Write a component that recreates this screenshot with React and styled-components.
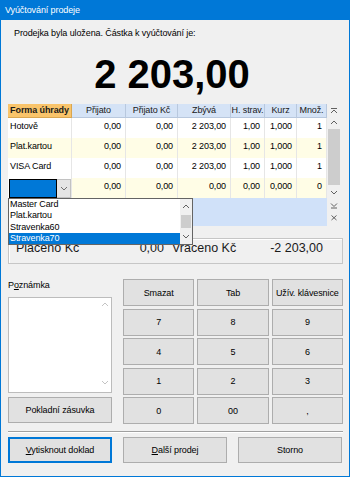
import styled, { createGlobalStyle } from "styled-components";

const GlobalStyle = createGlobalStyle`
  html, body {
    margin: 0;
    padding: 0;
    background: #f0f0f0;
  }
  body {
    font-family: "Liberation Sans", Arial, sans-serif;
    font-size: 9px;
    letter-spacing: -0.1px;
    color: #000;
  }
  * {
    box-sizing: border-box;
  }
`;

const Window = styled.div`
  width: 350px;
  height: 477px;
  display: flex;
  flex-direction: column;
  border: 1px solid #0078d7;
  border-top: none;
  background: #f0f0f0;
  overflow: hidden;
`;

const TitleBar = styled.div`
  height: 20px;
  margin: 0 -1px;
  padding-left: 5px;
  background: #0078d7;
  color: #fff;
  line-height: 20px;
`;

const Body = styled.div`
  flex: 1;
  display: flex;
  flex-direction: column;
  padding: 6px 6px 0 7px;
`;

const Prompt = styled.div`
  margin-left: 6px;
  line-height: 14px;
`;

const Amount = styled.div`
  margin-top: 11px;
  padding-right: 7px;
  text-align: center;
  font-size: 40px;
  font-weight: bold;
  line-height: 46px;
  letter-spacing: 0;
`;

const GridFrame = styled.div`
  position: relative;
  margin-top: 7px;
  height: 122px;
  display: flex;
`;

const Table = styled.div`
  width: 319px;
  display: flex;
  flex-direction: column;
  background: #d0e1f9;
`;

const columns = "64px 54px 52px 53px 34px 32px 30px";

const HeaderRow = styled.div`
  display: grid;
  grid-template-columns: ${columns};
  height: 14px;
`;

const HeaderCell = styled.div`
  background: ${(p) => (p.$accent ? "#f9c46b" : "#d5e3f6")};
  border-right: 1px solid ${(p) => (p.$accent ? "#d9a650" : "#b8c8de")};
  border-bottom: 1px solid ${(p) => (p.$accent ? "#d9a650" : "#b8c8de")};
  font-weight: ${(p) => (p.$accent ? "bold" : "normal")};
  text-align: center;
  line-height: 13px;
  color: #1a1a1a;
  white-space: nowrap;
  overflow: hidden;
`;

const DataRow = styled.div`
  display: grid;
  grid-template-columns: ${columns};
  height: 20px;
  background: ${(p) => (p.$alt ? "#fffde6" : "#ffffff")};
`;

const Cell = styled.div`
  padding: 0 ${(p) => (p.$left ? "0 0 2px" : "4px 0 0")};
  border-right: 1px solid #e6e6e6;
  text-align: ${(p) => (p.$left ? "left" : "right")};
  line-height: 17px;
  white-space: nowrap;
  overflow: hidden;
`;

const ComboCell = styled.div`
  display: flex;
  padding: 1px 0 0 1px;
  border-right: 1px solid #e6e6e6;
  background: #fff;
`;

const ComboField = styled.div`
  flex: 1;
  background: #0078d7;
  border: 1px solid #000;
`;

const ComboButton = styled.div`
  width: 14px;
  display: flex;
  align-items: center;
  justify-content: center;
  background: #e5e5e5;
  border: 1px solid #c2c2c2;
  border-left: none;
`;

const ScrollColumn = styled.div`
  width: 14px;
  display: flex;
  flex-direction: column;
  align-items: center;
  background: #f0f0f0;
`;

const ScrollSlot = styled.div`
  height: ${(p) => p.$h}px;
  display: flex;
  align-items: center;
  justify-content: center;
`;

const Thumb = styled.div`
  width: ${(p) => p.$w}px;
  height: ${(p) => p.$h}px;
  margin-top: ${(p) => p.$mt || 0}px;
  background: #cdcdcd;
`;

const DropList = styled.div`
  position: absolute;
  top: 94px;
  left: 0;
  width: 185px;
  height: 47px;
  display: flex;
  background: #fff;
  border: 1px solid #646464;
  z-index: 2;
`;

const Items = styled.div`
  flex: 1;
  display: flex;
  flex-direction: column;
`;

const Item = styled.div`
  height: 11.25px;
  line-height: 11px;
  padding-left: 1px;
  background: ${(p) => (p.$selected ? "#0078d7" : "transparent")};
  color: ${(p) => (p.$selected ? "#fff" : "#000")};
`;

const DropScroll = styled.div`
  width: 12px;
  display: flex;
  flex-direction: column;
  align-items: center;
  background: #f0f0f0;
`;

const Summary = styled.div`
  margin-top: 12px;
  height: 26px;
  display: grid;
  grid-template-columns: 148px 151px;
  column-gap: 8px;
  padding: 0 18px 0 7px;
  border: 1px solid #c6c6c6;
  box-shadow: inset 1px 1px 0 #fff;
  font-size: 12.5px;
  line-height: 18px;
  letter-spacing: 0;
  color: #1a1a1a;
`;

const SummaryPair = styled.div`
  display: flex;
  justify-content: space-between;
`;

const Lower = styled.div`
  margin-top: 15px;
  display: grid;
  grid-template-columns: 104px 1fr;
  column-gap: 11px;
`;

const NoteColumn = styled.div`
  display: flex;
  flex-direction: column;
`;

const Label = styled.div`
  line-height: 12px;
`;

const NoteBox = styled.div`
  margin-top: 6px;
  height: 96px;
  display: flex;
  justify-content: flex-end;
  background: #fff;
  border: 1px solid #bcbcbc;
`;

const NoteScroll = styled.div`
  width: 13px;
  display: flex;
  flex-direction: column;
  justify-content: space-between;
  padding: 3px 0 6px;
  align-items: center;
`;

const Keypad = styled.div`
  display: grid;
  grid-template-columns: repeat(3, 1fr);
  grid-auto-rows: 27px;
  gap: 2.5px 3px;
`;

const Button = styled.div`
  height: ${(p) => (p.$h ? `${p.$h}px` : "auto")};
  margin-top: ${(p) => p.$mt || 0}px;
  display: flex;
  align-items: center;
  justify-content: center;
  background: #e1e1e1;
  border: 1px solid ${(p) => (p.$focused ? "#0078d7" : "#adadad")};
  box-shadow: ${(p) => (p.$focused ? "inset 0 0 0 1px #0078d7" : "none")};
  color: #000;
  white-space: nowrap;
`;

const Separator = styled.div`
  margin-top: 7px;
  border-top: 1px solid #a0a0a0;
  border-bottom: 1px solid #fff;
`;

const Footer = styled.div`
  margin-top: 4px;
  display: grid;
  grid-template-columns: repeat(3, 104px);
  grid-auto-rows: 26px;
  column-gap: 11px;
`;

const glyphs = {
  first: "M1 1.5 H7 M1 6 L4 3 L7 6",
  up: "M1 5 L4 2 L7 5",
  down: "M1 2 L4 5 L7 2",
  last: "M1 1.5 L4 4.5 L7 1.5 M1 6 H7",
  close: "M1.5 1.5 L6.5 6 M6.5 1.5 L1.5 6",
};

function Glyph({ kind, color = "#606060" }) {
  return (
    <svg width="8" height="7" viewBox="0 0 8 7">
      <path d={glyphs[kind]} fill="none" stroke={color} strokeWidth="1" />
    </svg>
  );
}

const headers = ["Forma úhrady", "Přijato", "Přijato Kč", "Zbývá", "H. strav.", "Kurz", "Množ."];

const rows = [
  { id: 1, name: "Hotově", values: ["0,00", "0,00", "2 203,00", "1,00", "1,000", "1"] },
  { id: 2, name: "Plat.kartou", values: ["0,00", "0,00", "2 203,00", "1,00", "1,000", "1"] },
  { id: 3, name: "VISA Card", values: ["0,00", "0,00", "2 203,00", "1,00", "1,000", "1"] },
];

const options = ["Master Card", "Plat.kartou", "Stravenka60", "Stravenka70"];

const keys = ["Smazat", "Tab", "Užív. klávesnice", "7", "8", "9", "4", "5", "6", "1", "2", "3", "0", "00", ","];

function PaymentGrid() {
  return (
    <GridFrame>
      <Table>
        <HeaderRow>
          {headers.map((h, i) => (
            <HeaderCell key={h} $accent={i === 0}>
              {h}
            </HeaderCell>
          ))}
        </HeaderRow>
        {rows.map((row, i) => (
          <DataRow key={row.id} $alt={i % 2 === 1}>
            <Cell $left>{row.name}</Cell>
            {row.values.map((v, j) => (
              <Cell key={j}>{v}</Cell>
            ))}
          </DataRow>
        ))}
        <DataRow $alt>
          <ComboCell>
            <ComboField />
            <ComboButton>
              <Glyph kind="down" color="#707070" />
            </ComboButton>
          </ComboCell>
          {["0,00", "0,00", "0,00", "0,00", "0,000", "0"].map((v, j) => (
            <Cell key={j}>{v}</Cell>
          ))}
        </DataRow>
      </Table>
      <ScrollColumn>
        <ScrollSlot $h={12}>
          <Glyph kind="first" />
        </ScrollSlot>
        <ScrollSlot $h={13}>
          <Glyph kind="up" />
        </ScrollSlot>
        <Thumb $w={12} $h={56} />
        <ScrollSlot $h={14}>
          <Glyph kind="down" />
        </ScrollSlot>
        <ScrollSlot $h={13}>
          <Glyph kind="last" />
        </ScrollSlot>
        <ScrollSlot $h={10}>
          <Glyph kind="close" />
        </ScrollSlot>
      </ScrollColumn>
      <DropList>
        <Items>
          {options.map((o, i) => (
            <Item key={o} $selected={i === 3}>
              {o}
            </Item>
          ))}
        </Items>
        <DropScroll>
          <ScrollSlot $h={14}>
            <Glyph kind="up" />
          </ScrollSlot>
          <Thumb $w={10} $h={13} $mt={2} />
          <ScrollSlot $h={16}>
            <Glyph kind="down" />
          </ScrollSlot>
        </DropScroll>
      </DropList>
    </GridFrame>
  );
}

export default function App() {
  return (
    <>
      <GlobalStyle />
      <Window>
        <TitleBar>Vyúčtování prodeje</TitleBar>
        <Body>
          <Prompt>Prodejka byla uložena. Částka k vyúčtování je:</Prompt>
          <Amount>2 203,00</Amount>
          <PaymentGrid />
          <Summary>
            <SummaryPair>
              <span>Placeno Kč</span>
              <span>0,00</span>
            </SummaryPair>
            <SummaryPair>
              <span>Vráceno Kč</span>
              <span>-2 203,00</span>
            </SummaryPair>
          </Summary>
          <Lower>
            <NoteColumn>
              <Label>
                P<u>o</u>známka
              </Label>
              <NoteBox>
                <NoteScroll>
                  <Glyph kind="up" color="#c4c4c4" />
                  <Glyph kind="down" color="#c4c4c4" />
                </NoteScroll>
              </NoteBox>
              <Button $h={26} $mt={4}>
                Pokladní zásuvka
              </Button>
            </NoteColumn>
            <Keypad>
              {keys.map((k) => (
                <Button key={k}>{k}</Button>
              ))}
            </Keypad>
          </Lower>
          <Separator />
          <Footer>
            <Button $focused>
              <span>
                <u>V</u>ytisknout doklad
              </span>
            </Button>
            <Button>
              <span>
                <u>D</u>alší prodej
              </span>
            </Button>
            <Button>Storno</Button>
          </Footer>
        </Body>
      </Window>
    </>
  );
}
